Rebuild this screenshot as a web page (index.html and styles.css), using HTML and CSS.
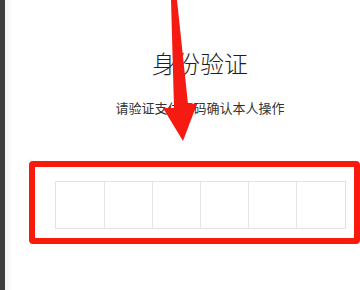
FILE: index.html
```html
<!DOCTYPE html>
<html lang="zh-CN">
<head>
<meta charset="utf-8">
<link rel="stylesheet" href="styles.css">
</head>
<body>
<div class="sidebar"></div>
<div class="gutter"></div>
<main class="panel">
  <h1 class="title">身份验证</h1>
  <p class="subtitle">请验证支付密码确认本人操作</p>
  <div class="code">
    <span class="cell"></span><span class="cell"></span><span class="cell"></span><span class="cell"></span><span class="cell"></span><span class="cell"></span>
  </div>
</main>
<div class="mark-box"></div>
<svg class="mark-arrow" width="360" height="290" viewBox="0 0 360 290">
  <polygon points="171,0 177,0 188,104 197,104 183,141 163,108 174,108" fill="#f51b12"/>
</svg>
</body>
</html>
```
FILE: styles.css
```css
html, body {
  margin: 0;
  padding: 0;
}
body {
  width: 360px;
  height: 290px;
  overflow: hidden;
  display: flex;
  position: relative;
  background: #fff;
  font-family: "Noto Sans CJK SC", "Noto Sans", sans-serif;
}
.sidebar {
  flex: 0 0 5px;
  background: #3d3d3d;
}
.gutter {
  flex: 0 0 6px;
  background: linear-gradient(to right, #f1f1f1, #fbfbfb);
}
.panel {
  flex: 1 1 auto;
  min-width: 0;
  padding: 51px 0 0 29px;
  text-align: center;
}
.title {
  margin: 0;
  font-size: 24px;
  line-height: 24px;
  font-weight: 300;
  color: #1e1e1e;
}
.subtitle {
  margin: 26px 0 0;
  font-size: 13px;
  line-height: 13px;
  font-weight: 400;
  color: #333;
}
.code {
  width: 291px;
  height: 48px;
  margin: 67px auto 0;
  box-sizing: border-box;
  border: 1px solid #e2e2e2;
  display: grid;
  grid-template-columns: repeat(6, 1fr);
}
.cell {
  border-left: 1px solid #e6e6e6;
}
.cell:first-child {
  border-left: none;
}
.mark-box {
  position: absolute;
  left: 29px;
  top: 161px;
  width: 331px;
  height: 83px;
  box-sizing: border-box;
  border: 6px solid #fa1a0c;
  border-radius: 4px;
}
.mark-arrow {
  position: absolute;
  left: 0;
  top: 0;
}
```
